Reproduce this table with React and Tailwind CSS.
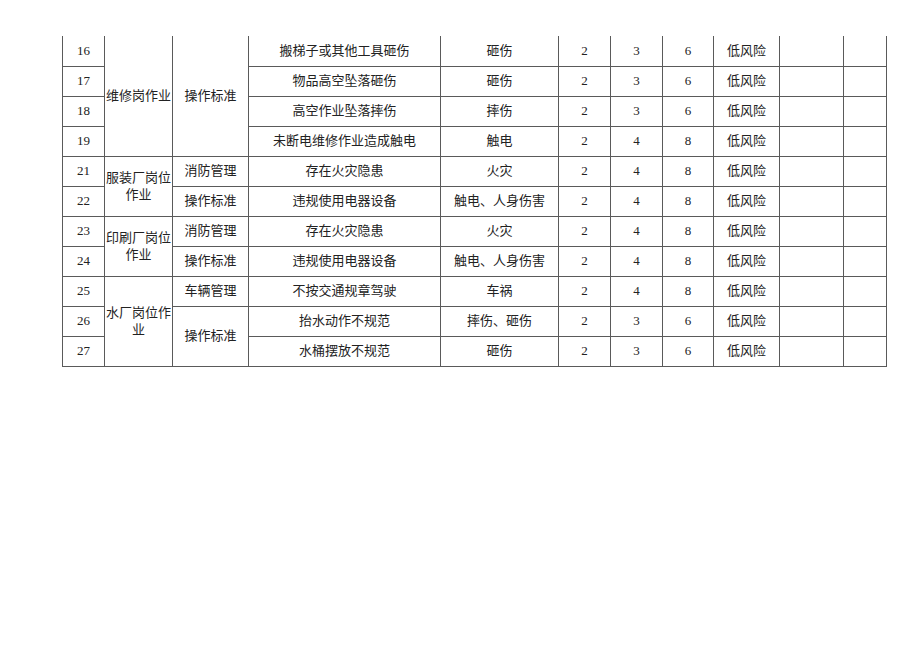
const rows = [
  { no: "16", hazard: "搬梯子或其他工具砸伤", type: "砸伤", l: 2, s: 3, r: 6 },
  { no: "17", hazard: "物品高空坠落砸伤", type: "砸伤", l: 2, s: 3, r: 6 },
  { no: "18", hazard: "高空作业坠落摔伤", type: "摔伤", l: 2, s: 3, r: 6 },
  { no: "19", hazard: "未断电维修作业造成触电", type: "触电", l: 2, s: 4, r: 8 },
  { no: "21", hazard: "存在火灾隐患", type: "火灾", l: 2, s: 4, r: 8 },
  { no: "22", hazard: "违规使用电器设备", type: "触电、人身伤害", l: 2, s: 4, r: 8 },
  { no: "23", hazard: "存在火灾隐患", type: "火灾", l: 2, s: 4, r: 8 },
  { no: "24", hazard: "违规使用电器设备", type: "触电、人身伤害", l: 2, s: 4, r: 8 },
  { no: "25", hazard: "不按交通规章驾驶", type: "车祸", l: 2, s: 4, r: 8 },
  { no: "26", hazard: "抬水动作不规范", type: "摔伤、砸伤", l: 2, s: 3, r: 6 },
  { no: "27", hazard: "水桶摆放不规范", type: "砸伤", l: 2, s: 3, r: 6 },
];

// 岗位 / 管理类别 合并单元格
const post = {
  0: { text: "维修岗作业", span: 4 },
  4: { text: "服装厂岗位作业", span: 2 },
  6: { text: "印刷厂岗位作业", span: 2 },
  8: { text: "水厂岗位作业", span: 3 },
};
const cat = {
  0: { text: "操作标准", span: 4 },
  4: { text: "消防管理", span: 1 },
  5: { text: "操作标准", span: 1 },
  6: { text: "消防管理", span: 1 },
  7: { text: "操作标准", span: 1 },
  8: { text: "车辆管理", span: 1 },
  9: { text: "操作标准", span: 2 },
};

const widths = [42, 68, 76, 192, 118, 52, 52, 51, 66, 64, 43];

const td = "border border-[#5a5a5a] text-center align-middle p-0";

export default function App() {
  return (
    <div
      className="w-[920px] h-[651px] bg-white text-[#222] text-[13px]"
      style={{ fontFamily: '"Liberation Serif", "Noto Sans CJK SC", serif' }}
    >
      <div className="pt-[36px] pl-[62px]">
        <table className="table-fixed border-collapse border-t-0">
          <colgroup>
            {widths.map((w, i) => (
              <col key={i} style={{ width: w }} />
            ))}
          </colgroup>
          <tbody>
            {rows.map((r, i) => (
              <tr key={r.no} className="h-[30px]">
                <td className={`${td} ${i === 0 ? "border-t-0" : ""}`}>{r.no}</td>
                {post[i] && (
                  <td
                    rowSpan={post[i].span}
                    className={`${td} leading-[17px] ${i === 0 ? "border-t-0" : ""}`}
                  >
                    {post[i].text}
                  </td>
                )}
                {cat[i] && (
                  <td rowSpan={cat[i].span} className={`${td} ${i === 0 ? "border-t-0" : ""}`}>
                    {cat[i].text}
                  </td>
                )}
                <td className={`${td} ${i === 0 ? "border-t-0" : ""}`}>{r.hazard}</td>
                <td className={`${td} ${i === 0 ? "border-t-0" : ""}`}>{r.type}</td>
                <td className={`${td} ${i === 0 ? "border-t-0" : ""}`}>{r.l}</td>
                <td className={`${td} ${i === 0 ? "border-t-0" : ""}`}>{r.s}</td>
                <td className={`${td} ${i === 0 ? "border-t-0" : ""}`}>{r.r}</td>
                <td className={`${td} ${i === 0 ? "border-t-0" : ""}`}>低风险</td>
                <td className={`${td} ${i === 0 ? "border-t-0" : ""}`}></td>
                <td className={`${td} ${i === 0 ? "border-t-0" : ""}`}></td>
              </tr>
            ))}
          </tbody>
        </table>
      </div>
    </div>
  );
}
